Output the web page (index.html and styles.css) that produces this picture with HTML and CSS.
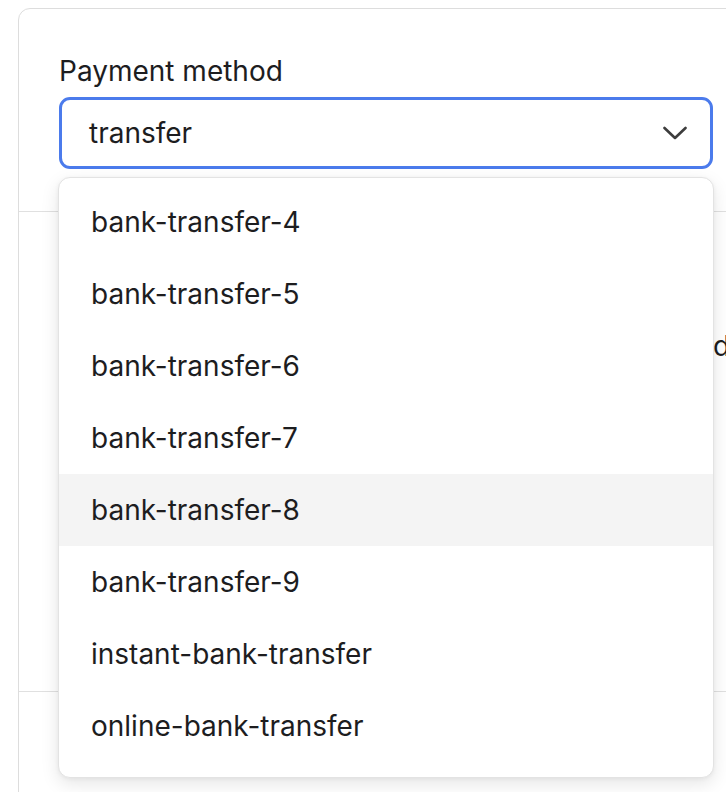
FILE: index.html
```html
<!DOCTYPE html>
<html>
<head>
<meta charset="utf-8">
<link rel="stylesheet" href="styles.css">
</head>
<body>
<div class="card">
  <section class="section first">
    <label class="label">Payment method</label>
    <div class="select-wrap">
      <div class="select">
        <span class="select-value">transfer</span>
        <svg class="chevron" width="24" height="24" viewBox="0 0 24 24"><path d="M1.5 7 L12 17 L22.5 7" fill="none" stroke="#3d3d3d" stroke-width="2.6" stroke-linecap="round" stroke-linejoin="round"/></svg>
      </div>
      <ul class="menu">
        <li class="option">bank-transfer-4</li>
        <li class="option">bank-transfer-5</li>
        <li class="option">bank-transfer-6</li>
        <li class="option">bank-transfer-7</li>
        <li class="option active">bank-transfer-8</li>
        <li class="option">bank-transfer-9</li>
        <li class="option">instant-bank-transfer</li>
        <li class="option">online-bank-transfer</li>
      </ul>
    </div>
  </section>
  <section class="section middle">
    <div class="row">
      <span class="row-right">default</span>
    </div>
  </section>
  <section class="section last"></section>
</div>
</body>
</html>
```
FILE: styles.css
```css
html, body {
  margin: 0;
  padding: 0;
  background: #ffffff;
  overflow: hidden;
  height: 792px;
}
body {
  font-family: Inter, "Noto Sans", "Liberation Sans", sans-serif;
  color: #1d1d1f;
}
.card {
  margin: 8px 0 0 18px;
  width: 736px;
  border: 1px solid #dddddd;
  border-radius: 12px;
  background: #fff;
}
.section {
  padding: 44px 40px 42px 40px;
  border-bottom: 1px solid #e0e0e0;
}
.section.middle {
  height: 480px;
  box-sizing: border-box;
  padding: 0 0 0 694px;
}
.section.last {
  border-bottom: none;
  height: 120px;
  box-sizing: border-box;
  padding: 0;
}
.label {
  display: block;
  font-size: 28px;
  line-height: 36px;
  margin-bottom: 8px;
}
.select-wrap {
  position: relative;
  width: 654px;
}
.select {
  box-sizing: border-box;
  height: 72px;
  border: 3px solid #4b7bec;
  border-radius: 11px;
  display: flex;
  align-items: center;
  justify-content: space-between;
  padding: 0 23px 0 27px;
  background: #fff;
}
.select-value {
  font-size: 28px;
}
.chevron {
  display: block;
}
.menu {
  position: absolute;
  top: calc(100% + 8px);
  left: -1px;
  width: 656px;
  box-sizing: border-box;
  margin: 0;
  padding: 8px 0 15px 0;
  list-style: none;
  background: #fff;
  border: 1px solid #e3e3e3;
  border-radius: 12px;
  box-shadow: 0 6px 18px rgba(0,0,0,0.10), 0 1px 4px rgba(0,0,0,0.05);
  z-index: 10;
}
.option {
  height: 72px;
  display: flex;
  align-items: center;
  padding-left: 32px;
  font-size: 28px;
}
.option.active {
  background: #f4f4f4;
}
.row {
  display: flex;
  align-items: center;
  height: 268px;
  font-size: 28px;
}
```
